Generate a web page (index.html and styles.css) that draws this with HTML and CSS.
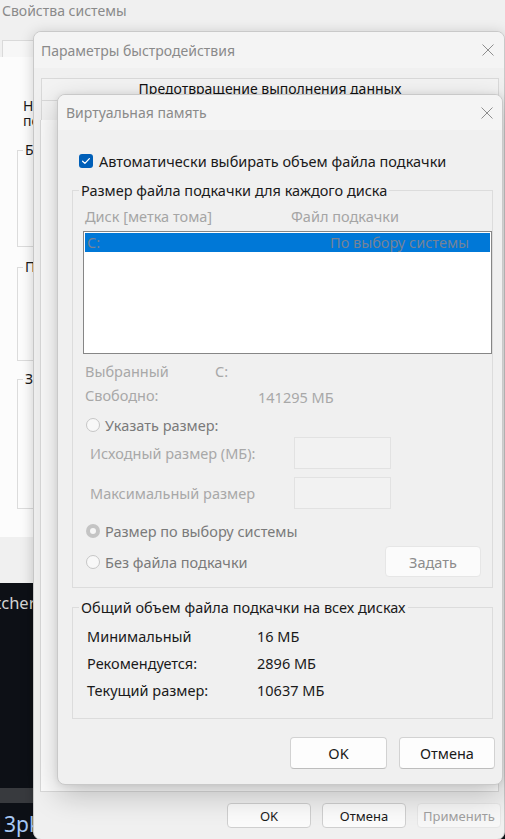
FILE: index.html
```html
<!DOCTYPE html>
<html lang="ru">
<head>
<meta charset="utf-8">
<title>Виртуальная память</title>
<link rel="stylesheet" href="styles.css">
</head>
<body>
<div class="desktop">
  <div class="syswin">
    <div class="sys-title">Свойства системы</div>
    <div class="sys-tabs"><span class="sys-tab"></span></div>
    <div class="sys-page">
      <p class="sys-note">Необходимо иметь права администратора для изменения<br>перечисленных параметров.</p>
      <div class="sys-group g1"><span class="sys-legend">Быстродействие</span></div>
      <div class="sys-group g2"><span class="sys-legend">Профили пользователей</span></div>
      <div class="sys-group g3"><span class="sys-legend">Загрузка и восстановление</span></div>
    </div>
    <div class="sys-footer"></div>
  </div>
  <div class="terminal">
    <div class="term-line">Switcher</div>
    <div class="term-bar"></div>
    <div class="term-prompt">13pk</div>
  </div>

  <div class="perfwin">
    <div class="titlebar">
      <span class="title">Параметры быстродействия</span>
      <svg class="close" width="12" height="12" viewBox="0 0 12 12"><path d="M0.5 0.5L11.5 11.5M11.5 0.5L0.5 11.5" stroke="#8e8e8e" stroke-width="1" fill="none"/></svg>
    </div>
    <div class="perf-tabs">
      <div class="perf-tabrow1">Предотвращение выполнения данных</div>
      <div class="perf-tabrow2"><span class="perf-tab">Визуальные эффекты</span><span class="perf-tab">Дополнительно</span></div>
    </div>
    <div class="perf-page"></div>
    <div class="perf-footer">
      <button class="pbtn">OK</button>
      <button class="pbtn">Отмена</button>
      <button class="pbtn disabled">Применить</button>
    </div>
  </div>

  <div class="vmwin">
    <div class="titlebar vm-titlebar">
      <span class="title">Виртуальная память</span>
      <svg class="close" width="12" height="12" viewBox="0 0 12 12"><path d="M0.5 0.5L11.5 11.5M11.5 0.5L0.5 11.5" stroke="#8e8e8e" stroke-width="1" fill="none"/></svg>
    </div>
    <div class="vm-body">
      <div class="check-row">
        <span class="checkbox"><svg width="14" height="14" viewBox="0 0 14 14"><path d="M3.6 7.2L5.9 9.4L10.4 4.6" stroke="#ffffff" stroke-width="1.3" fill="none" stroke-linecap="round" stroke-linejoin="round"/></svg></span>
        <span class="check-label">Автоматически выбирать объем файла подкачки</span>
      </div>

      <fieldset class="group">
        <legend class="legend">Размер файла подкачки для каждого диска</legend>
        <div class="list-head"><span class="lh-col1">Диск [метка тома]</span><span>Файл подкачки</span></div>
        <div class="listbox">
          <div class="list-sel"><span class="ls-col1">C:</span><span>По выбору системы</span></div>
        </div>
        <div class="info-row"><span class="ir-col1">Выбранный</span><span>C:</span></div>
        <div class="info-row free"><span class="ir-col2">Свободно:</span><span class="free-val">141295 МБ</span></div>
        <div class="radio-row r-first"><span class="radio"></span><span class="radio-label">Указать размер:</span></div>
        <div class="input-row"><span class="in-label">Исходный размер (МБ):</span><span class="input"></span></div>
        <div class="input-row r-second"><span class="in-label">Максимальный размер</span><span class="input"></span></div>
        <div class="radio-row r-sys"><span class="radio on"></span><span class="radio-label">Размер по выбору системы</span></div>
        <div class="radio-row r-last"><span class="radio"></span><span class="radio-label">Без файла подкачки</span><button class="set-btn">Задать</button></div>
      </fieldset>

      <fieldset class="group total">
        <legend class="legend">Общий объем файла подкачки на всех дисках</legend>
        <div class="total-row first"><span class="tr-col1">Минимальный</span><span>16 МБ</span></div>
        <div class="total-row"><span class="tr-col1">Рекомендуется:</span><span>2896 МБ</span></div>
        <div class="total-row"><span class="tr-col1">Текущий размер:</span><span>10637 МБ</span></div>
      </fieldset>

      <div class="dlg-buttons">
        <button class="dbtn ok">OK</button>
        <button class="dbtn">Отмена</button>
      </div>
    </div>
  </div>
</div>
</body>
</html>
```

FILE: styles.css
```css
html, body {
  margin: 0;
  padding: 0;
}
body {
  width: 505px;
  height: 839px;
  overflow: hidden;
  font-family: "Noto Sans", "Open Sans", sans-serif;
  font-size: 14.5px;
  color: #1a1a1a;
}
.desktop {
  position: relative;
  width: 505px;
  height: 839px;
  overflow: hidden;
  background: #0d1016;
}

/* background: System Properties */
.syswin {
  height: 583px;
  background: #f0f0f0;
  display: flex;
  flex-direction: column;
}
.sys-title {
  height: 22px;
  line-height: 22px;
  padding-left: 2px;
  color: #8a8a8a;
  font-size: 14px;
}
.sys-tabs {
  margin-top: 18px;
  height: 17px;
  display: flex;
}
.sys-tab {
  margin-left: 2px;
  width: 200px;
  border: 1px solid #dadada;
  border-bottom: none;
  background: #f7f7f7;
}
.sys-page {
  height: 480px;
  background: #fcfcfc;
  padding-top: 41px;
  box-sizing: border-box;
}
.sys-note {
  margin: 0 0 0 23px;
  line-height: 15px;
  font-size: 14px;
  color: #1a1a1a;
  white-space: nowrap;
}
.sys-group {
  margin-left: 17px;
  width: 420px;
  border: 1px solid #dcdcdc;
  box-sizing: border-box;
}
.sys-group.g1 { margin-top: 22px; height: 97px; }
.sys-group.g2 { margin-top: 20px; height: 94px; }
.sys-group.g3 { margin-top: 18px; height: 130px; }
.sys-legend {
  display: block;
  width: fit-content;
  margin: -11px 0 0 5px;
  padding: 0 2px;
  line-height: 20px;
  background: #fcfcfc;
  font-size: 14px;
  color: #1a1a1a;
  white-space: nowrap;
}
.sys-footer { flex: 1; }

/* terminal behind */
.terminal {
  height: 256px;
  background: #0d1016;
  display: flex;
  flex-direction: column;
  overflow: hidden;
}
.term-line {
  margin: 9px 0 0 -31px;
  line-height: 22px;
  font-size: 16.5px;
  color: #d4d4d4;
  white-space: nowrap;
}
.term-bar {
  margin-top: 174px;
  height: 15px;
  background: #383a3e;
}
.term-prompt {
  margin: 6px 0 0 -8px;
  line-height: 30px;
  font-size: 21px;
  color: #a9c9f5;
  white-space: nowrap;
}

/* windows */
.perfwin, .vmwin {
  position: absolute;
  background: #f0f0f0;
  border: 1px solid #c9c9c9;
  border-radius: 8px;
  overflow: hidden;
  display: flex;
  flex-direction: column;
  box-sizing: border-box;
}
.perfwin {
  left: 33px;
  top: 31px;
  width: 472px;
  height: 809px;
  box-shadow: 0 2px 14px rgba(0, 0, 0, 0.18);
}
.vmwin {
  left: 57px;
  top: 94px;
  width: 446px;
  box-shadow: 0 10px 30px rgba(0, 0, 0, 0.22), 0 0 6px rgba(0, 0, 0, 0.08);
}
.titlebar {
  height: 36px;
  flex: none;
  display: flex;
  align-items: center;
  padding-left: 7px;
  padding-right: 10px;
  background: #f4f4f4;
}
.vm-titlebar {
  height: 35px;
  padding-left: 8px;
  padding-right: 9px;
}
.title {
  flex: 1;
  font-size: 14px;
  color: #8a8a8a;
  white-space: nowrap;
}
.close { flex: none; display: block; }

.perf-tabs {
  margin: 10px 5px 0 7px;
  flex: none;
}
.perf-tabrow1 {
  height: 22px;
  box-sizing: border-box;
  border: 1px solid #d9d9d9;
  border-bottom: none;
  background: #f3f3f3;
  text-align: center;
  line-height: 20px;
  font-size: 14px;
  color: #111;
  white-space: nowrap;
}
.perf-tabrow2 {
  height: 20px;
  display: flex;
}
.perf-tab {
  width: 170px;
  border: 1px solid #d9d9d9;
  border-bottom: none;
  background: #f3f3f3;
  font-size: 14px;
  line-height: 18px;
  padding-left: 22px;
  color: #111;
  white-space: nowrap;
  overflow: hidden;
}
.perf-page {
  flex: 1;
  margin: 0 5px 0 6px;
  background: #fcfcfc;
  border: 1px solid #d9d9d9;
  border-top: none;
}
.perf-footer {
  flex: none;
  display: flex;
  justify-content: flex-end;
  gap: 11px;
  padding: 11px 3px 11px 0;
}
.pbtn {
  width: 84px;
  height: 25px;
  padding: 0;
  border: 1px solid #cfcfcf;
  border-radius: 4px;
  background: #fbfbfb;
  font-family: inherit;
  font-size: 13px;
  color: #1a1a1a;
}
.pbtn.disabled {
  border-color: #e6e6e6;
  color: #a0a0a0;
  background: #f7f7f7;
}

/* virtual memory dialog */
.vm-body {
  padding: 0 9px 15px 14px;
}
.check-row {
  margin: 21px 0 0 7px;
  height: 20px;
  display: flex;
  align-items: center;
  gap: 6px;
}
.checkbox {
  width: 14px;
  height: 14px;
  border-radius: 3px;
  background: #005fb8;
  display: block;
  flex: none;
}
.checkbox svg { display: block; }
.check-label {
  white-space: nowrap;
  color: #1a1a1a;
}
.group {
  margin: 9px 0 0 0;
  padding: 0 0 10px 0;
  border: 1px solid #dcdcdc;
  min-width: 0;
}
.legend {
  margin-left: 6px;
  padding: 0 2px;
  line-height: 20px;
  color: #1a1a1a;
  white-space: nowrap;
}
.list-head {
  margin-top: 6px;
  padding-left: 12px;
  height: 20px;
  line-height: 20px;
  display: flex;
  color: #a5a5a5;
  white-space: nowrap;
}
.lh-col1 { width: 206px; flex: none; }
.listbox {
  margin: 5px 0 0 10px;
  height: 123px;
  box-sizing: border-box;
  border: 1px solid #868686;
  background: #ffffff;
  padding: 1px;
}
.list-sel {
  height: 19px;
  line-height: 19px;
  background: #0078d7;
  display: flex;
  padding-left: 2px;
  color: #758396;
  white-space: nowrap;
}
.ls-col1 { width: 243px; flex: none; }
.info-row {
  margin-top: 7px;
  padding-left: 12px;
  height: 20px;
  line-height: 20px;
  display: flex;
  color: #a8a8a8;
  white-space: nowrap;
}
.info-row.free { margin-top: 4px; }
.ir-col1 { width: 130px; flex: none; }
.ir-col2 { width: 173px; flex: none; }
.free-val { position: relative; top: 2px; }
.radio-row {
  padding-left: 13px;
  height: 20px;
  display: flex;
  align-items: center;
  gap: 5px;
  white-space: nowrap;
}
.r-first { margin-top: 10px; }
.r-sys { margin-top: 12px; }
.r-last { margin-top: 5px; height: 31px; }
.radio {
  width: 14px;
  height: 14px;
  box-sizing: border-box;
  border-radius: 50%;
  border: 1px solid #c6c6c6;
  background: #f8f8f8;
  flex: none;
  display: flex;
  align-items: center;
  justify-content: center;
}
.radio.on {
  border: none;
  background: #c4c4c4;
}
.radio.on::after {
  content: "";
  width: 6px;
  height: 6px;
  border-radius: 50%;
  background: #f6f6f6;
}
.radio-label { color: #7a7a7a; }
.input-row {
  margin-top: 2px;
  padding-left: 17px;
  height: 32px;
  display: flex;
  align-items: center;
  white-space: nowrap;
}
.input-row.r-second { margin-top: 8px; }
.in-label {
  width: 204px;
  flex: none;
  color: #a8a8a8;
}
.input {
  width: 97px;
  height: 32px;
  box-sizing: border-box;
  border: 1px solid #e2e2e2;
  background: #f2f2f2;
}
.set-btn {
  margin-left: auto;
  margin-right: 11px;
  width: 96px;
  height: 31px;
  padding: 0;
  border: 1px solid #e6e6e6;
  border-radius: 4px;
  background: #fbfbfb;
  font-family: inherit;
  font-size: 14.5px;
  color: #8c8c8c;
}
.group.total {
  padding: 6px 0 14px 0;
}
.group.total .legend { margin-bottom: -6px; }
.total-row {
  padding-left: 14px;
  height: 27px;
  line-height: 27px;
  display: flex;
  white-space: nowrap;
  color: #1a1a1a;
}
.total-row.first { margin-top: 6px; }
.tr-col1 { width: 170px; flex: none; }
.dlg-buttons {
  margin: 18px -2px 0 0;
  display: flex;
  justify-content: flex-end;
  gap: 12px;
}
.dbtn {
  width: 96px;
  height: 32px;
  padding: 0;
  border: 1px solid #d2d2d2;
  border-bottom-color: #bdbdbd;
  border-radius: 4px;
  background: #fdfdfd;
  font-family: inherit;
  font-size: 14.5px;
  color: #1a1a1a;
}
.dbtn.ok { width: 97px; }
```
